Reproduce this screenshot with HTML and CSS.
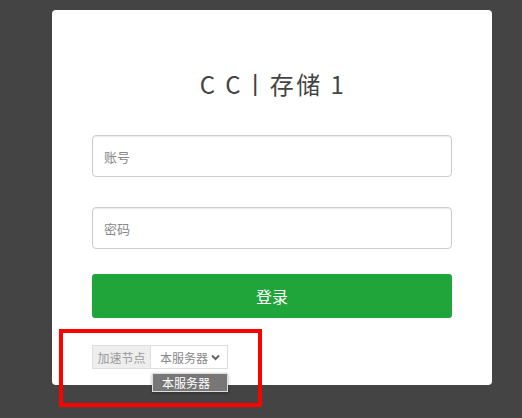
FILE: index.html
```html
<!DOCTYPE html>
<html lang="zh">
<head>
<meta charset="utf-8">
<link rel="stylesheet" href="styles.css">
</head>
<body>
<div class="card">
  <h1 class="title">C C丨存储 1</h1>
  <div class="field"><span class="ph">账号</span></div>
  <div class="field"><span class="ph">密码</span></div>
  <div class="btn">登录</div>
  <div class="node">
    <span class="addon">加速节点</span>
    <span class="select">本服务器
      <svg class="chev" width="9" height="7" viewBox="0 0 9 7"><path d="M1 1.5 L4.5 5 L8 1.5" fill="none" stroke="#666" stroke-width="2"/></svg>
    </span>
    <div class="menu">本服务器</div>
  </div>
</div>
<div class="mark"></div>
</body>
</html>
```
FILE: styles.css
```css
html, body { margin: 0; padding: 0; }
body {
  background: #444;
  width: 522px;
  height: 418px;
  overflow: hidden;
  position: relative;
  font-family: "Noto Sans CJK SC", "Noto Sans", sans-serif;
}
.card {
  margin: 10px 0 0 52px;
  width: 440px;
  height: 375px;
  box-sizing: border-box;
  background: #fff;
  border-radius: 4px;
  padding: 57px 40px 0 40px;
}
.title {
  margin: 0 0 34px 0;
  height: 34px;
  line-height: 34px;
  text-align: center;
  font-weight: 400;
  font-size: 24px;
  color: #444;
  letter-spacing: 2.5px;
  text-indent: 2px;
}
.field {
  height: 42px;
  box-sizing: border-box;
  border: 1px solid #ccc;
  border-radius: 4px;
  box-shadow: inset 0 1px 1px rgba(0,0,0,0.08);
  display: flex;
  align-items: center;
  padding-left: 11px;
  margin-bottom: 30px;
}
.field:nth-of-type(2) { margin-bottom: 25px; }
.ph { font-size: 13px; color: #888; }
.btn {
  height: 44px;
  background: #20a53a;
  border-radius: 3px;
  color: #fff;
  font-size: 16px;
  display: flex;
  align-items: center;
  justify-content: center;
}
.node {
  margin-top: 27px;
  display: flex;
  position: relative;
  height: 24px;
}
.addon {
  box-sizing: border-box;
  width: 59px;
  height: 24px;
  background: #eee;
  border: 1px solid #ddd;
  color: #999;
  font-size: 12px;
  display: flex;
  align-items: center;
  justify-content: center;
}
.select {
  box-sizing: border-box;
  width: 77px;
  height: 24px;
  border: 1px solid #ddd;
  border-left: none;
  color: #888;
  font-size: 12px;
  display: flex;
  align-items: center;
  padding-left: 9px;
  gap: 3px;
}
.chev { margin-top: 1px; }
.menu {
  position: absolute;
  left: 60px;
  top: 28px;
  width: 76px;
  height: 19px;
  box-sizing: border-box;
  background: #777;
  border: 1px solid #ddd;
  box-shadow: 0 1px 3px rgba(0,0,0,0.3);
  color: #fff;
  font-size: 12px;
  line-height: 17px;
  padding-left: 9px;
}
.mark {
  position: absolute;
  left: 59px;
  top: 329px;
  width: 203px;
  height: 78px;
  box-sizing: border-box;
  border: 4px solid #f00;
}
```
